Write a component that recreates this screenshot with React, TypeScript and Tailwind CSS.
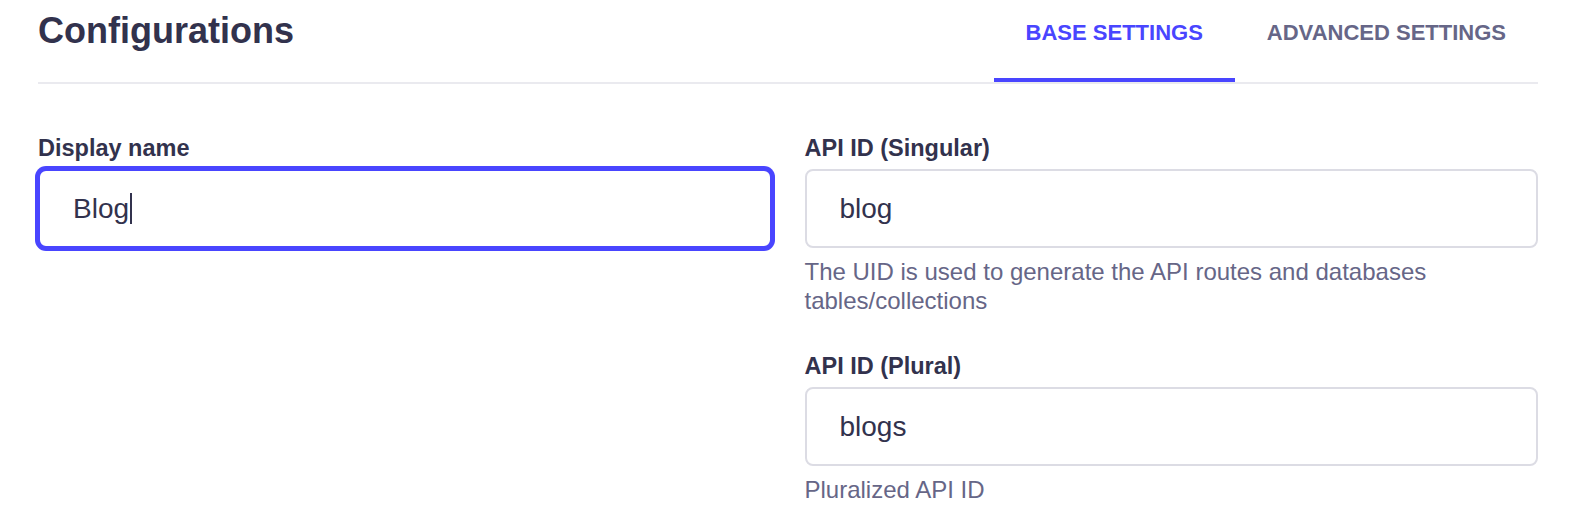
import React from 'react';

const tabs = [
  { label: 'BASE SETTINGS', active: true },
  { label: 'ADVANCED SETTINGS', active: false },
];

const Label: React.FC<{ children: React.ReactNode }> = ({ children }) => (
  <label className="block text-[23.5px] leading-[30px] font-bold text-[#32324d]">{children}</label>
);

const Hint: React.FC<{ children: React.ReactNode }> = ({ children }) => (
  <p className="mt-[9px] text-[24px] leading-[29px] text-[#666687]">{children}</p>
);

const TextBox: React.FC<{ value: string; focused?: boolean }> = ({ value, focused }) => (
  <div
    className={
      focused
        ? 'mt-[6px] flex h-[79px] items-center rounded-[8px] border-2 border-[#4945ff] bg-white px-[33px] ring-[3px] ring-[#4945ff]'
        : 'mt-[6px] flex h-[79px] items-center rounded-[8px] border-2 border-[#dcdce4] bg-white px-[33px]'
    }
  >
    <span className="text-[28px] leading-[32px] text-[#32324d]">{value}</span>
    {focused && <span className="ml-px inline-block h-[31px] w-[2px] bg-[#32324d]" />}
  </div>
);

export default function App() {
  return (
    <div className="min-h-[528px] bg-white pl-[38px] pr-[32px] font-['Liberation_Sans',Arial,sans-serif]">
      {/* header with tabs */}
      <div className="flex h-[84px] items-stretch justify-between border-b-2 border-[#eaeaef]">
        <h2 className="pt-[9px] text-[36px] leading-[44px] font-bold text-[#32324d]">Configurations</h2>
        <div className="flex items-stretch">
          {tabs.map((tab) => (
            <div
              key={tab.label}
              className={
                tab.active
                  ? 'border-b-4 border-[#4945ff] px-[32px] pt-[20px] text-[22px] leading-[25px] font-bold text-[#4945ff]'
                  : 'border-b-4 border-transparent px-[32px] pt-[20px] text-[22px] leading-[25px] font-bold text-[#666687]'
              }
            >
              {tab.label}
            </div>
          ))}
        </div>
      </div>

      {/* form */}
      <div className="grid grid-cols-2 gap-x-[33px] pt-[49px]">
        <div>
          <Label>Display name</Label>
          <TextBox value="Blog" focused />
        </div>
        <div>
          <Label>API ID (Singular)</Label>
          <TextBox value="blog" />
          <Hint>The UID is used to generate the API routes and databases tables/collections</Hint>

          <div className="mt-[36px]">
            <Label>API ID (Plural)</Label>
            <TextBox value="blogs" />
            <Hint>Pluralized API ID</Hint>
          </div>
        </div>
      </div>
    </div>
  );
}
